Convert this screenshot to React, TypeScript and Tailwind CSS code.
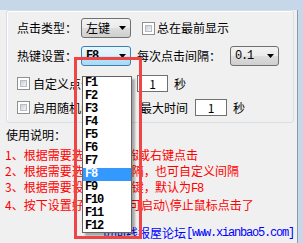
import React from "react";

const cjk = "font-['Noto_Sans_CJK_SC','Noto_Sans',sans-serif]";
const mono = "font-['Liberation_Mono','DejaVu_Sans_Mono',monospace] tracking-[-1.2px]";

const keys = ["F1", "F2", "F3", "F4", "F5", "F6", "F7", "F8", "F9", "F10", "F11", "F12"];

const Arrow = () => (
  <svg width="7" height="4" viewBox="0 0 7 4" className="shrink-0">
    <polygon points="0,0 7,0 3.5,4" fill="#000" />
  </svg>
);

const ComboBox = ({
  value,
  width,
  active,
  monoText,
}: {
  value: string;
  width: string;
  active?: boolean;
  monoText?: boolean;
}) => (
  <div
    className={`${width} h-[20px] flex items-center justify-between pl-[4px] pr-[4px] rounded-[3px] border ${
      active
        ? "border-[#3c7fb1] bg-[linear-gradient(#eaf6fd,#d9f0fc_50%,#bee6fd_50%,#a7d9f5)]"
        : "border-[#707070] bg-[linear-gradient(#f2f2f2,#ebebeb_50%,#dddddd_50%,#cfcfcf)]"
    }`}
  >
    <span className={`${monoText ? mono : ""} ${active ? "font-bold" : ""} text-[12px] leading-[16px] text-black`}>
      {value}
    </span>
    <Arrow />
  </div>
);

const CheckBox = () => (
  <div className="w-[13px] h-[13px] shrink-0 border border-[#8f8f8f] bg-white p-[2px]">
    <div className="w-full h-full bg-[linear-gradient(135deg,#cbcfd5,#f4f4f4)] border border-[#b8bcc3]" />
  </div>
);

const NumBox = ({ width }: { width: string }) => (
  <div
    className={`${width} h-[17px] border border-[#707070] bg-white flex items-center justify-center text-[12px] leading-[14px]`}
  >
    1
  </div>
);

export default function App() {
  return (
    <div className={`${cjk} w-[303px] h-[243px] bg-[#c6d7ea] overflow-hidden text-[12px] text-black`}>
      <div className="relative w-[298px] h-[238px] bg-[#f0f0f0] border-r border-b border-[#8a9bb0]">
        {/* group box */}
        <div className="ml-[6px] mt-[10px] w-[288px] h-[113px] rounded-[3px] border border-[#d5dfe5] shadow-[inset_1px_1px_0_#ffffff] pl-[10px] pt-[7px]">
          <div className="flex items-center h-[20px] leading-[16px]">
            <span className="w-[64px]">点击类型：</span>
            <ComboBox value="左键" width="w-[50px]" />
            <div className="ml-[11px]">
              <CheckBox />
            </div>
            <span className="ml-[2px]">总在最前显示</span>
          </div>

          <div className="flex items-center h-[20px] mt-[8px] leading-[16px]">
            <span className="w-[64px]">热键设置：</span>
            <ComboBox value="F8" width="w-[50px]" active monoText />
            <span className="ml-[6px] w-[84px] whitespace-nowrap">每次点击间隔：</span>
            <div className="ml-[9px]">
              <ComboBox value="0.1" width="w-[49px]" monoText />
            </div>
          </div>

          <div className="flex items-center h-[17px] mt-[9px] leading-[16px]">
            <CheckBox />
            <span className="ml-[3px] w-[104px] whitespace-nowrap overflow-hidden">自定义点击间隔</span>
            <NumBox width="w-[31px]" />
            <span className="ml-[6px]">秒</span>
          </div>

          <div className="flex items-center h-[17px] mt-[7px] leading-[16px]">
            <CheckBox />
            <span className="ml-[3px] w-[107px] whitespace-nowrap overflow-hidden">启用随机间隔，</span>
            <span className="w-[48px] whitespace-nowrap">最大时间</span>
            <div className="ml-[7px]">
              <NumBox width="w-[32px]" />
            </div>
            <span className="ml-[6px]">秒</span>
          </div>
        </div>

        {/* instructions */}
        <div className="ml-[6px] mt-[4px] leading-[16px]">使用说明：</div>
        <div className="pl-[5px] mt-[4px] leading-[16px] text-[#ff0000] whitespace-nowrap">
          <div className="flex">
            <span className="w-[133px] overflow-hidden">1、根据需要选择鼠标左键</span>
            <span>或右键点击</span>
          </div>
          <div className="flex">
            <span className="w-[150px] overflow-hidden">2、根据需要选择点击间隔，</span>
            <span>也可自定义间隔</span>
          </div>
          <div className="flex">
            <span className="w-[150px] overflow-hidden">3、根据需要设置启动热键，</span>
            <span>
              默认为<span className={mono}>F8</span>
            </span>
          </div>
          <div className="flex">
            <span className="w-[124px] overflow-hidden">4、按下设置好的热键即</span>
            <span>可启动\停止鼠标点击了</span>
          </div>
        </div>

        <div className="mt-[12px] pr-[3px] flex justify-end leading-[16px] text-[#0000ff] whitespace-nowrap">
          <span>访问线报屋论坛</span>
          <span className={mono}>[www.xianbao5.com]</span>
        </div>

        {/* open drop-down list */}
        <div className="absolute left-[82px] top-[66px] w-[50px] h-[157px] bg-white border border-[#646464] shadow-[3px_3px_2px_rgba(0,0,0,0.3)]">
          {keys.map((k) => (
            <div
              key={k}
              className={`h-[13px] pl-[2px] flex items-center ${mono} font-bold text-[12px] leading-[13px] ${
                k === "F8" ? "bg-[#3399ff] text-white" : "text-black"
              }`}
            >
              {k}
            </div>
          ))}
        </div>

        {/* red highlight frame */}
        <div className="absolute left-[74px] top-[47px] w-[68px] h-[182px] border-[3px] border-[#f04545]" />
      </div>
    </div>
  );
}
